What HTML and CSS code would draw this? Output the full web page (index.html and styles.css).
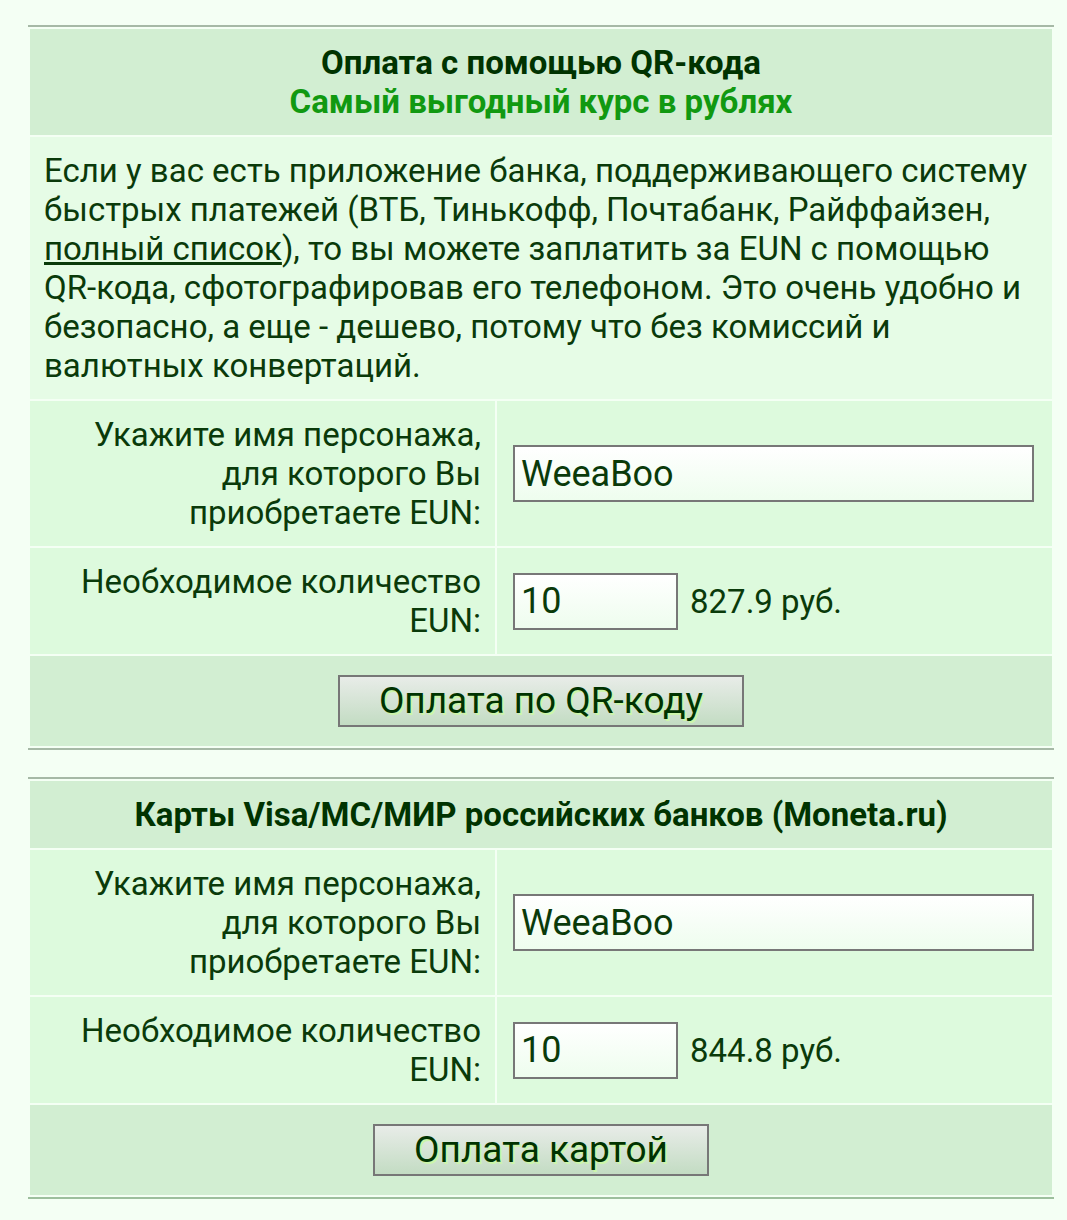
FILE: index.html
```html
<!DOCTYPE html>
<html lang="ru">
<head>
    <meta charset="UTF-8">
    <meta name="viewport" content="width=device-width, initial-scale=1.0">
    <title>Пополнение EUN</title>
    <link rel="stylesheet" href="styles.css">
</head>
<body>
    <div class="page">
        <hr class="line">
        <form class="pay" onsubmit="return false">
            <table class="pay-table">
                <colgroup>
                    <col class="col-label">
                    <col>
                </colgroup>
                <tr>
                    <td colspan="2" class="head">
                        <div class="title">Оплата с помощью QR-кода</div>
                        <div class="subtitle">Самый выгодный курс в рублях</div>
                    </td>
                </tr>
                <tr>
                    <td colspan="2" class="info">
                        Если у вас есть приложение банка, поддерживающего систему быстрых платежей (ВТБ, Тинькофф, Почтабанк, Райффайзен, <a href="#">полный список</a>), то вы можете заплатить за EUN с помощью QR-кода, сфотографировав его телефоном. Это очень удобно и безопасно, а еще - дешево, потому что без комиссий и валютных конвертаций.
                    </td>
                </tr>
                <tr>
                    <td class="label">Укажите имя персонажа, для которого Вы приобретаете EUN:</td>
                    <td class="field"><input class="input wide" type="text" value="WeeaBoo"></td>
                </tr>
                <tr>
                    <td class="label">Необходимое количество EUN:</td>
                    <td class="field"><input class="input short" type="text" value="10" oninput="calc(this, 82.79)"><span class="price">827.9 руб.</span></td>
                </tr>
                <tr>
                    <td colspan="2" class="actions"><button class="btn qr">Оплата по QR-коду</button></td>
                </tr>
            </table>
        </form>
        <hr class="line">

        <hr class="line gap">
        <form class="pay" onsubmit="return false">
            <table class="pay-table">
                <colgroup>
                    <col class="col-label">
                    <col>
                </colgroup>
                <tr>
                    <td colspan="2" class="head">
                        <div class="title">Карты Visa/MC/МИР российских банков (Moneta.ru)</div>
                    </td>
                </tr>
                <tr>
                    <td class="label">Укажите имя персонажа, для которого Вы приобретаете EUN:</td>
                    <td class="field"><input class="input wide" type="text" value="WeeaBoo"></td>
                </tr>
                <tr>
                    <td class="label">Необходимое количество EUN:</td>
                    <td class="field"><input class="input short" type="text" value="10" oninput="calc(this, 84.48)"><span class="price">844.8 руб.</span></td>
                </tr>
                <tr>
                    <td colspan="2" class="actions"><button class="btn card">Оплата картой</button></td>
                </tr>
            </table>
        </form>
        <hr class="line last">
    </div>
    <script>
        function calc(input, rate) {
            var n = parseFloat(input.value) || 0;
            input.nextElementSibling.textContent = (n * rate).toFixed(1) + ' руб.';
        }
    </script>
</body>
</html>
```

FILE: styles.css
```css
body {
    margin: 0;
    background: #f4fff4;
    color: #0a3a0a;
    font-family: Roboto, "Noto Sans", sans-serif;
    font-size: 33px;
    line-height: 39px;
}
.page {
    width: 1026px;
    padding: 25px 0 0 28px;
}
.line {
    margin: 0;
    border: none;
    height: 2px;
    background: #a6b9a6;
}
.line.gap {
    margin-top: 27px;
}
.line.last {
    background: #9dbf9d;
}
.pay {
    margin: 0;
}
.pay-table {
    width: 100%;
    border-spacing: 2px;
    table-layout: fixed;
}
.col-label {
    width: 465px;
}
.pay-table td {
    padding: 0;
}
.head {
    background: #d2eed2;
    text-align: center;
    font-weight: bold;
    padding: 14px !important;
}
.title {
    color: #003300;
}
.subtitle {
    color: #119911;
}
.info {
    background: #e6fce6;
    padding: 14px !important;
}
.info a {
    color: #0a3a0a;
}
.label {
    background: #ddfadd;
    text-align: right;
    padding: 14px 14px 14px 0 !important;
}
.field {
    background: #ddfadd;
    padding: 0 18px 0 16px !important;
    white-space: nowrap;
}
.input {
    box-sizing: border-box;
    height: 57px;
    border: 2px solid #777;
    background: linear-gradient(#ffffff, #eefdee);
    font-family: inherit;
    font-size: 36px;
    color: #0a3a0a;
    padding: 0 6px;
    vertical-align: middle;
}
.input.wide {
    width: 100%;
}
.input.short {
    width: 165px;
}
.price {
    margin-left: 12px;
    vertical-align: middle;
}
.actions {
    background: #d2eed2;
    text-align: center;
    padding: 19px 0 !important;
}
.btn {
    box-sizing: border-box;
    height: 52px;
    border: 2px solid #777;
    background: linear-gradient(#e8ece8, #c3dcc3);
    color: #003300;
    font-family: inherit;
    font-size: 37px;
    line-height: 48px;
    text-shadow: 2px 2px 0 #ccf5aa;
    cursor: pointer;
    padding: 0;
}
.btn.qr {
    width: 406px;
}
.btn.card {
    width: 336px;
}
```
